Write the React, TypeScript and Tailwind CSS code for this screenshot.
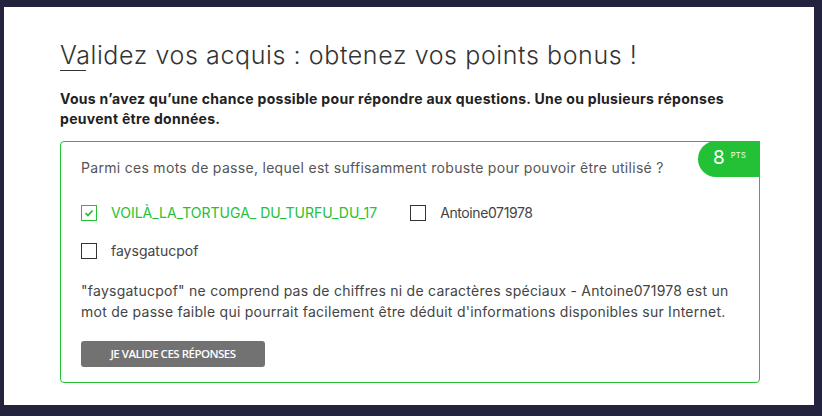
import React from "react";

function Box({ checked }: { checked?: boolean }) {
  return (
    <span
      className={`flex h-[16px] w-[16px] shrink-0 items-center justify-center border-[1.5px] ${
        checked ? "border-[#23c136]" : "border-[#333]"
      }`}
    >
      {checked && (
        <svg width="10" height="8" viewBox="0 0 10 8" fill="none">
          <path d="M1.5 4.2 L4 6.5 L8.5 1.5" stroke="#23c136" strokeWidth="1.8" />
        </svg>
      )}
    </span>
  );
}

export default function App() {
  return (
    <div className="h-[416px] w-[822px] bg-[#23233d] pl-[4px] pr-[8px] pt-[7px] pb-[11px]" style={{ fontFamily: "Inter, 'Noto Sans', sans-serif" }}>
      <div className="h-full w-full bg-white pl-[56px] pr-[54px] pt-[34px]">
        <h1 className="text-[25px] font-light leading-[28px] text-[#333] tracking-[0.6px]">
          Validez vos acquis : obtenez vos points bonus !
        </h1>
        <div className="mt-[1px] h-[1px] w-[26px] bg-[#333]" />
        <p className="mt-[18px] text-[14px] font-bold leading-[20px] text-[#222] tracking-[0.3px]">
          Vous n’avez qu’une chance possible pour répondre aux questions. Une ou plusieurs réponses peuvent être données.
        </p>
        <div className="relative mt-[12px] h-[242px] w-[700px] rounded-[4px] border border-[#23c136] px-[20px] pt-[16px]">
          <div className="absolute right-[-1px] top-[-1px] flex h-[36px] w-[62px] items-start rounded-l-full rounded-tr-[4px] bg-[#23c136] pl-[15px] pt-[5px] text-white">
            <span className="text-[19px] leading-[24px]">8</span>
            <span className="ml-[6px] mt-[6px] text-[7.5px] leading-[8px] tracking-[0.3px]">PTS</span>
          </div>
          <p className="text-[14px] leading-[20px] text-[#555] tracking-[0.3px]">
            Parmi ces mots de passe, lequel est suffisamment robuste pour pouvoir être utilisé ?
          </p>
          <div className="mt-[25px] flex items-center">
            <Box checked />
            <span className="ml-[14px] text-[14px] leading-[20px] text-[#23c136]">VOILÀ_LA_TORTUGA_ DU_TURFU_DU_17</span>
            <span className="ml-[33px]"><Box /></span>
            <span className="ml-[14px] text-[14px] leading-[20px] text-[#444] tracking-[-0.4px]">Antoine071978</span>
          </div>
          <div className="mt-[18px] flex items-center">
            <Box />
            <span className="ml-[14px] text-[14px] leading-[20px] text-[#444]">faysgatucpof</span>
          </div>
          <p className="mt-[19px] text-[14px] leading-[21px] text-[#444] tracking-[0.25px]">
            "faysgatucpof" ne comprend pas de chiffres ni de caractères spéciaux - Antoine071978 est un mot de passe faible qui pourrait facilement être déduit d'informations disponibles sur Internet.
          </p>
          <button
            className="mt-[19px] flex h-[26px] w-[184px] items-center justify-center rounded-[3px] bg-[#727272] text-[11.5px] font-semibold uppercase text-white tracking-[-0.5px]"
            style={{ fontFamily: "'Open Sans', sans-serif" }}
          >
            Je valide ces réponses
          </button>
        </div>
      </div>
    </div>
  );
}
